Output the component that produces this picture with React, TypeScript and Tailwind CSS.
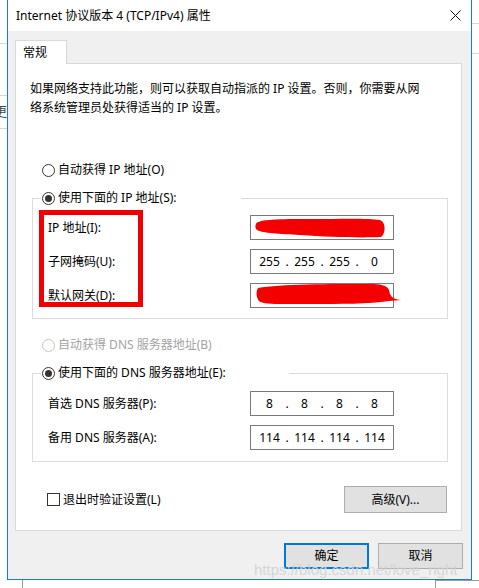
import React from 'react';

const IP_ROWS = [
  { label: 'IP 地址(I):', value: null as string[] | null, scribble: 'a' },
  { label: '子网掩码(U):', value: ['255', '255', '255', '0'], scribble: '' },
  { label: '默认网关(D):', value: null as string[] | null, scribble: 'b' },
];

const DNS_ROWS = [
  { label: '首选 DNS 服务器(P):', value: ['8', '8', '8', '8'] },
  { label: '备用 DNS 服务器(A):', value: ['114', '114', '114', '114'] },
];

function Radio({ checked, disabled }: { checked?: boolean; disabled?: boolean }) {
  return (
    <span
      className={`flex h-[13px] w-[13px] shrink-0 items-center justify-center rounded-full border bg-white ${
        disabled ? 'border-[#c4c4c4]' : 'border-[#333333]'
      }`}
    >
      {checked && <span className="h-[7px] w-[7px] rounded-full bg-[#333333]" />}
    </span>
  );
}

function IpBox({ value, scribble }: { value: string[] | null; scribble?: string }) {
  return (
    <div className="relative flex h-[25px] w-[144px] items-center border border-[#7a7a7a] bg-white pl-[6px]">
      {value &&
        value.map((v, i) => (
          <React.Fragment key={i}>
            <span className="w-[25px] text-center">{v}</span>
            {i < 3 && <span className="w-[10px] text-center">.</span>}
          </React.Fragment>
        ))}
      {/* red marker scribbles over the hidden addresses */}
      {scribble === 'a' && (
        <svg className="absolute left-[-1px] top-[-1px] overflow-visible" width="144" height="25" viewBox="0 0 144 25">
          <path
            d="M6,9 C8,4 30,4 60,4 C90,4 118,3 130,5 C136,7 136,19 131,22 C110,23 80,22 50,20 C30,19 12,18 7,15 C5,13 5,11 6,9 Z"
            fill="#f50000"
          />
        </svg>
      )}
      {scribble === 'b' && (
        <svg className="absolute left-[-1px] top-[-1px] overflow-visible" width="144" height="25" viewBox="0 0 144 25">
          <path
            d="M8,5 C30,1 80,1 120,1 C130,1 137,2 139,7 C140,12 141,16 151,17 L139,18 C120,21 90,21 60,21 C30,21 14,22 9,18 C6,14 6,8 8,5 Z"
            fill="#f50000"
          />
        </svg>
      )}
    </div>
  );
}

export default function App() {
  return (
    <div className="relative h-[588px] w-[479px] overflow-hidden bg-white font-['Noto_Sans','Noto_Sans_CJK_SC',sans-serif] text-[12px] text-black">
      {/* bits of the app behind the dialog */}
      <div className="absolute left-0 top-[43px] h-px w-[7px] bg-[#d6d6d6]" />
      <div className="absolute left-0 top-[95px] h-px w-[7px] bg-[#d6d6d6]" />
      <div className="absolute left-0 top-[128px] h-px w-[7px] bg-[#d6d6d6]" />
      <div className="absolute left-[-6px] top-[102px] text-[13px] text-[#444]">更</div>
      <div className="absolute right-0 top-[23px] h-px w-[7px] bg-[#d6d6d6]" />
      <div className="absolute right-0 top-[53px] h-px w-[7px] bg-[#d6d6d6]" />

      <div className="ml-[7px] flex h-[580px] w-[465px] flex-col border-x border-b border-[#1c7ccc] bg-[#f0f0f0]">
        {/* title bar */}
        <div className="flex h-[31px] shrink-0 items-center justify-between bg-white pl-[8px] pr-[10px]">
          <span>Internet 协议版本 4 (TCP/IPv4) 属性</span>
          <svg width="11" height="11" viewBox="0 0 11 11">
            <path d="M0.5,0.5 L10.5,10.5 M10.5,0.5 L0.5,10.5" stroke="#111" strokeWidth="1" />
          </svg>
        </div>

        <div className="pl-[7px] pr-[9px] pt-[9px]">
          {/* tab */}
          <div className="relative z-10 -mb-px flex h-[24px] w-[52px] items-center border border-b-0 border-[#d9d9d9] bg-white pl-[7px]">
            常规
          </div>

          {/* tab panel */}
          <div className="h-[468px] border border-[#d9d9d9] bg-white">
            <p className="pl-[14px] pt-[15px] leading-[19px]">
              如果网络支持此功能，则可以获取自动指派的 IP 设置。否则，你需要从网
              <br />
              络系统管理员处获得适当的 IP 设置。
            </p>

            <div className="ml-[26px] mt-[45px] flex h-[16px] items-center gap-[3px]">
              <Radio />
              <span>自动获得 IP 地址(O)</span>
            </div>

            <div className="relative ml-[16px] mt-[20px] w-[416px] border border-[#dcdcdc] pb-[10px]">
              <div className="-mt-[10px] ml-[8px] flex h-[18px] w-[200px] items-center gap-[3px] bg-white pl-[1px]">
                <Radio checked />
                <span>使用下面的 IP 地址(S):</span>
              </div>
              <div className="mt-[8px] flex flex-col gap-[9px]">
                {IP_ROWS.map((row) => (
                  <div key={row.label} className="flex h-[25px] items-center">
                    <span className="w-[217px] pl-[15px]">{row.label}</span>
                    <IpBox value={row.value} scribble={row.scribble} />
                  </div>
                ))}
              </div>
              {/* red annotation box */}
              <div className="absolute left-[6px] top-[11px] h-[97px] w-[104px] border-[5px] border-[#f00000]" />
            </div>

            <div className="ml-[26px] mt-[18px] flex h-[16px] items-center gap-[3px] text-[#a3a3a3]">
              <Radio disabled />
              <span>自动获得 DNS 服务器地址(B)</span>
            </div>

            <div className="ml-[16px] mt-[20px] w-[416px] border border-[#dcdcdc] pb-[11px]">
              <div className="-mt-[10px] ml-[8px] flex h-[18px] w-[248px] items-center gap-[3px] bg-white pl-[1px]">
                <Radio checked />
                <span>使用下面的 DNS 服务器地址(E):</span>
              </div>
              <div className="mt-[9px] flex flex-col gap-[9px]">
                {DNS_ROWS.map((row) => (
                  <div key={row.label} className="flex h-[25px] items-center">
                    <span className="w-[217px] pl-[15px]">{row.label}</span>
                    <IpBox value={row.value} />
                  </div>
                ))}
              </div>
            </div>

            <div className="mt-[24px] flex h-[27px] items-center justify-between pl-[31px] pr-[14px]">
              <div className="flex items-center gap-[3px]">
                <span className="h-[13px] w-[13px] border border-[#333333] bg-white" />
                <span>退出时验证设置(L)</span>
              </div>
              <button className="h-[27px] w-[103px] border border-[#adadad] bg-[#e1e1e1]">高级(V)...</button>
            </div>
          </div>

          {/* dialog buttons */}
          <div className="-mr-px mt-[12px] flex justify-end gap-[9px]">
            <button className="h-[26px] w-[85px] border-2 border-[#0078d7] bg-[#e1e1e1]">确定</button>
            <button className="h-[26px] w-[85px] border border-[#adadad] bg-[#e1e1e1]">取消</button>
          </div>
        </div>
      </div>

      <div className="absolute left-[22px] top-[580px] h-[8px] w-px bg-[#9a9a9a]" />
      <div className="absolute left-[435px] top-[580px] h-[8px] w-[44px] border-l border-t border-[#9a9a9a]" />

      {/* blog watermark */}
      <div className="pointer-events-none absolute left-[254px] top-[559px] font-['Liberation_Sans',sans-serif] text-[15px] text-[#d4d4d4] opacity-90">
        https://blog.csdn.net/love_right
      </div>
    </div>
  );
}
